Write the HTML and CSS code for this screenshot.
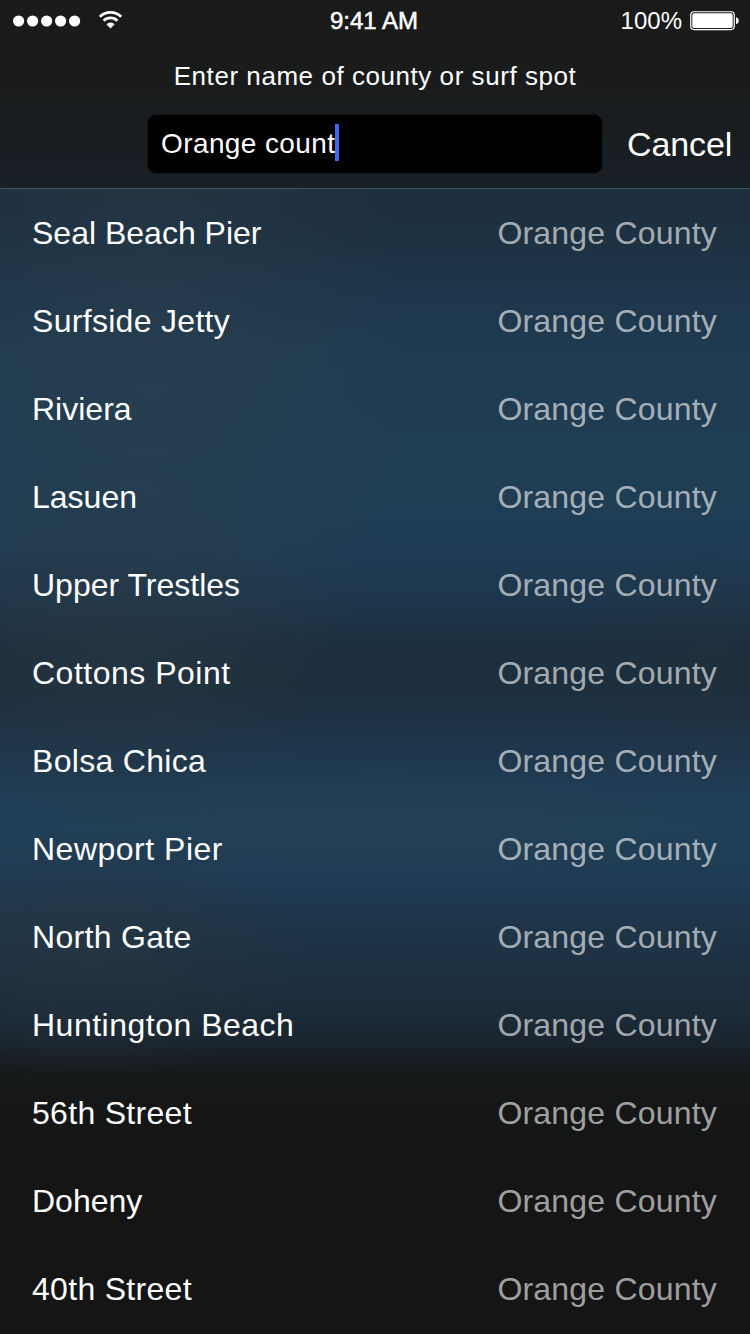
FILE: index.html
```html
<!DOCTYPE html>
<html lang="en">
<head>
<meta charset="utf-8">
<title>Spot search</title>
<link rel="stylesheet" href="styles.css">
</head>
<body>
<div class="screen">
  <header class="header">
    <div class="status">
      <div class="status-left">
        <svg class="signal" width="68" height="12" viewBox="0 0 68 12" fill="#fff"><circle cx="5.6" cy="6" r="5.6"/><circle cx="19.6" cy="6" r="5.6"/><circle cx="33.6" cy="6" r="5.6"/><circle cx="47.6" cy="6" r="5.6"/><circle cx="61.6" cy="6" r="5.6"/></svg>
        <svg class="wifi" width="25" height="19" viewBox="0 0 26 20" fill="none" stroke="#fff"><path d="M1.7 7.1A16 16 0 0 1 24.3 7.1" stroke-width="3"/><path d="M5.8 11.3A10.3 10.3 0 0 1 20.2 11.3" stroke-width="2.9"/><path d="M8.700 15.100a5.900 5.900 0 0 1 8.600 0L13 19.400z" fill="#fff" stroke="none"/></svg>
      </div>
      <div class="time">9:41 AM</div>
      <div class="status-right">
        <span class="percent">100%</span>
        <svg class="battery" width="50" height="20" viewBox="0 0 50 20"><rect x=".75" y=".75" width="43.5" height="17.8" rx="3.2" fill="none" stroke="#fff" stroke-width="1.2"/><rect x="2.3" y="2.3" width="40.4" height="14.7" rx="1.8" fill="#fff"/><path d="M46 6.3c1.7.3 2.8 1.6 2.8 3.4S47.700 12.800 46 13.100z" fill="#fff"/></svg>
      </div>
    </div>
    <div class="prompt">Enter name of county or surf spot</div>
    <div class="search">
      <div class="field"><span class="query">Orange count</span><span class="caret"></span></div>
      <div class="cancel">Cancel</div>
    </div>
  </header>
  <ul class="list">
    <li class="row"><span class="spot tight">Seal Beach Pier</span><span class="county">Orange County</span></li>
    <li class="row"><span class="spot">Surfside Jetty</span><span class="county">Orange County</span></li>
    <li class="row"><span class="spot tight">Riviera</span><span class="county">Orange County</span></li>
    <li class="row"><span class="spot tight">Lasuen</span><span class="county">Orange County</span></li>
    <li class="row"><span class="spot tight">Upper Trestles</span><span class="county">Orange County</span></li>
    <li class="row"><span class="spot wide">Cottons Point</span><span class="county">Orange County</span></li>
    <li class="row"><span class="spot">Bolsa Chica</span><span class="county">Orange County</span></li>
    <li class="row"><span class="spot wide">Newport Pier</span><span class="county">Orange County</span></li>
    <li class="row"><span class="spot">North Gate</span><span class="county">Orange County</span></li>
    <li class="row"><span class="spot wide">Huntington Beach</span><span class="county">Orange County</span></li>
    <li class="row"><span class="spot">56th Street</span><span class="county">Orange County</span></li>
    <li class="row"><span class="spot tight">Doheny</span><span class="county">Orange County</span></li>
    <li class="row"><span class="spot">40th Street</span><span class="county">Orange County</span></li>
  </ul>
</div>
</body>
</html>
```

FILE: styles.css
```css
* { box-sizing: border-box; }
body {
  margin: 0;
  background: #151515;
  color: #fff;
  font-family: "Liberation Sans", Arial, sans-serif;
}
.screen {
  width: 750px;
  height: 1334px;
  overflow: hidden;
  display: flex;
  flex-direction: column;
}
.header {
  height: 189px;
  border-bottom: 1px solid #40545f;
  background: linear-gradient(#1a1a1a 0, #1a1b1b 70px, #191d20 130px, #182027 188px);
}
.status {
  height: 40px;
  display: grid;
  grid-template-columns: 1fr auto 1fr;
  align-items: center;
  font-size: 24px;
  line-height: 28px;
}
.status-left {
  display: flex;
  align-items: center;
  gap: 17px;
  padding-left: 13px;
}
.signal { margin-top: 1px; }
.wifi { margin-top: -1px; }
.time {
  letter-spacing: 0;
  -webkit-text-stroke: 0.5px #fff;
  padding-top: 1px;
  padding-right: 2px;
}
.status-right {
  display: flex;
  align-items: center;
  justify-content: flex-end;
  gap: 8px;
  padding-right: 10px;
}
.percent { padding-top: 1px; }
.battery { margin-top: 2px; }
.prompt {
  height: 74px;
  padding-top: 21px;
  text-align: center;
  font-size: 26px;
  line-height: 30px;
  letter-spacing: 0.55px;
}
.search {
  height: 60px;
  display: flex;
  align-items: center;
  padding-left: 147px;
}
.field {
  width: 456px;
  height: 60px;
  border-radius: 9px;
  background: #000;
  border: 1px solid #10171b;
  padding-left: 13px;
  display: flex;
  align-items: center;
  font-size: 28px;
  letter-spacing: 0.4px;
}
.caret {
  width: 4px;
  height: 37px;
  margin-top: -3px;
  background: #4069f0;
}
.cancel {
  margin-left: 24px;
  font-size: 34px;
  letter-spacing: -0.1px;
}
.list {
  margin: 0;
  padding: 0;
  list-style: none;
  flex: 1;
  background:
    radial-gradient(ellipse 260px 420px at 150px 170px, rgba(48, 64, 76, 0.42), rgba(48, 64, 76, 0)),
    radial-gradient(ellipse 220px 190px at 110px 460px, rgba(42, 54, 62, 0.4), rgba(42, 54, 62, 0)),
    radial-gradient(ellipse 210px 130px at 95px 765px, rgba(42, 54, 62, 0.5), rgba(42, 54, 62, 0)),
    radial-gradient(ellipse 350px 60px at 380px 636px, rgba(46, 66, 80, 0.35), rgba(46, 66, 80, 0)),
    radial-gradient(ellipse 130px 130px at 710px 480px, rgba(36, 48, 56, 0.25), rgba(36, 48, 56, 0)),
    linear-gradient(#1e2f3e 0, #1d3142 50px, #1e364b 100px, #1f3b51 165px, #1f3d53 300px, #1e3b53 365px, #1e364b 415px, #1d3040 455px, #1d2f3d 495px, #1e3347 535px, #1f3c54 600px, #203f56 640px, #1f3b54 690px, #1e3549 735px, #1d3041 790px, #1b2a37 830px, #19222a 860px, #16191a 885px, #151616 930px, #151515 980px);
}
.row {
  height: 88px;
  padding: 0 33px 0 32px;
  display: flex;
  align-items: center;
  justify-content: space-between;
  font-size: 32px;
  line-height: 36px;
}
.spot { letter-spacing: 0.3px; }
.tight { letter-spacing: 0; }
.wide { letter-spacing: 0.5px; }
.county {
  color: rgba(255, 255, 255, 0.6);
  letter-spacing: 0.2px;
}
```
